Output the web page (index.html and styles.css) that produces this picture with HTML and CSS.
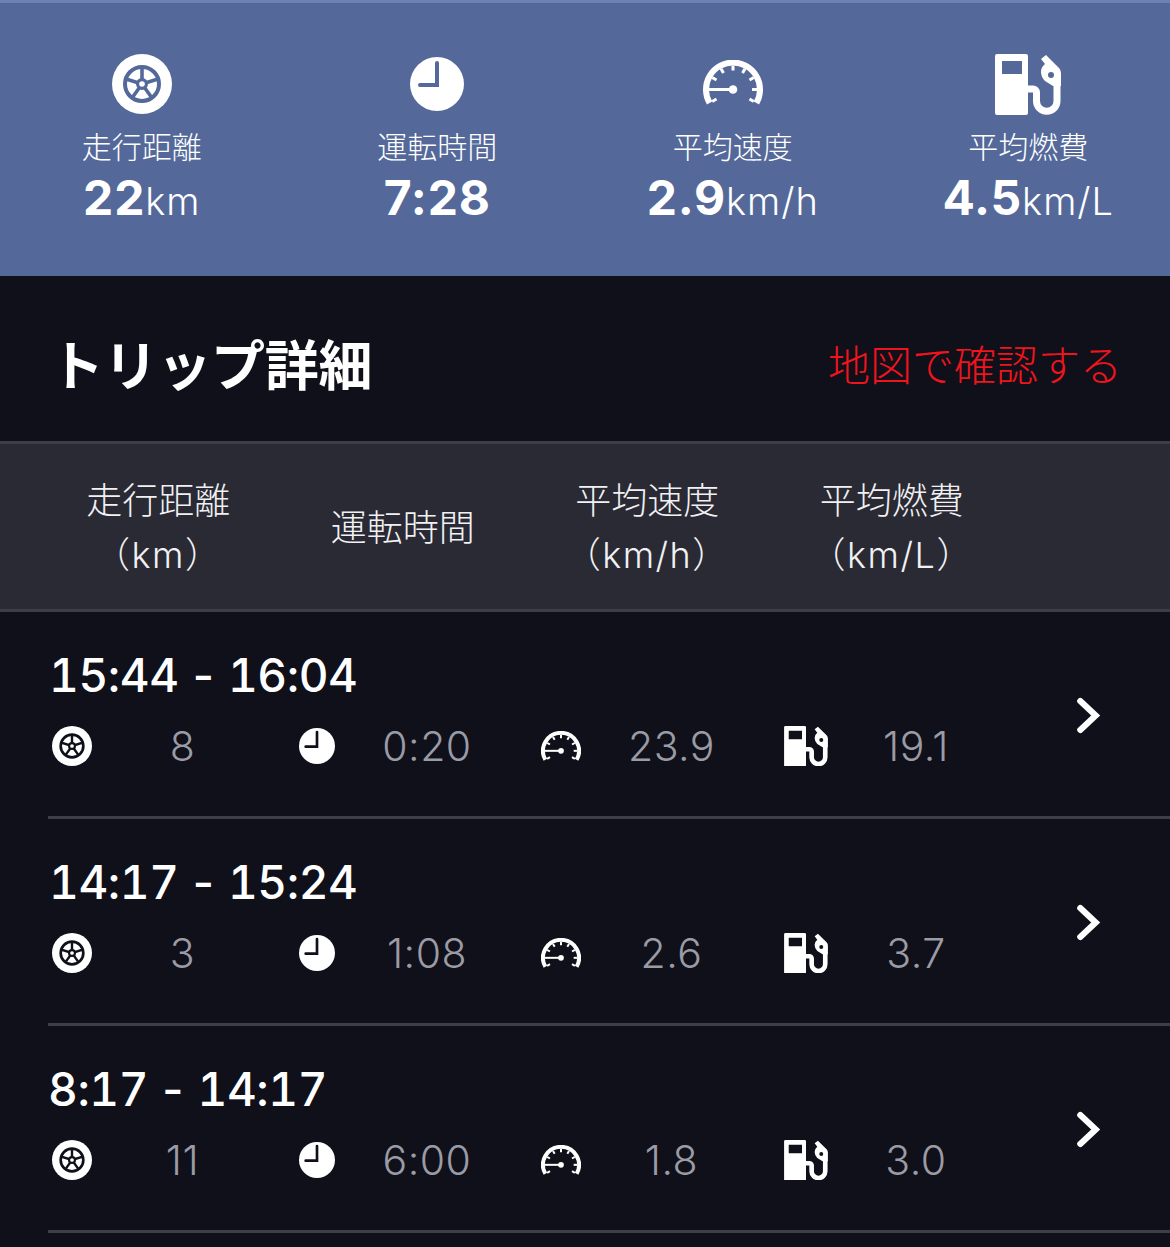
FILE: index.html
```html
<!DOCTYPE html>
<html lang="ja">
<head>
<meta charset="utf-8">
<title>トリップ詳細</title>
<link rel="stylesheet" href="styles.css">
</head>
<body>
<svg class="defs" width="0" height="0">
  <defs>
    <symbol id="tire" viewBox="0 0 60 60">
      <circle cx="30" cy="30" r="30" fill="#fff"/>
      <circle cx="30" cy="30" r="17" fill="none" stroke="var(--c)" stroke-width="4"/>
      <g stroke="var(--c)" stroke-width="3.6">
        <line x1="30" y1="30" x2="30" y2="13"/>
        <line x1="30" y1="30" x2="46" y2="25"/>
        <line x1="30" y1="30" x2="40" y2="44"/>
        <line x1="30" y1="30" x2="20" y2="44"/>
        <line x1="30" y1="30" x2="14" y2="25"/>
      </g>
      <circle cx="30" cy="30" r="6" fill="var(--c)"/>
      <circle cx="30" cy="30" r="2.8" fill="#fff"/>
    </symbol>
    <symbol id="clock" viewBox="0 0 54 54">
      <circle cx="27" cy="27" r="27" fill="#fff"/>
      <path d="M27 6V28H10" fill="none" stroke="var(--c)" stroke-width="4" stroke-linecap="round"/>
    </symbol>
    <symbol id="gauge" viewBox="0 0 60 46">
      <path d="M6.600 43A27 27 0 1 1 53.400 43" fill="none" stroke="#fff" stroke-width="6"/>
      <g stroke="#fff" stroke-width="3">
        <line x1="30" y1="5.500" x2="30" y2="10.500"/>
        <line x1="42" y1="8.700" x2="39.500" y2="13"/>
        <line x1="50.800" y1="17.500" x2="46.500" y2="20"/>
        <line x1="54" y1="29.500" x2="49" y2="29.500"/>
        <line x1="50.800" y1="41.500" x2="46.500" y2="39"/>
        <line x1="18" y1="8.700" x2="20.500" y2="13"/>
        <line x1="9.200" y1="17.500" x2="13.500" y2="20"/>
        <line x1="9.200" y1="41.500" x2="13.500" y2="39"/>
      </g>
      <path d="M4 29.500H30" stroke="#fff" stroke-width="3" fill="none"/>
      <circle cx="30" cy="29.500" r="4.300" fill="#fff"/>
    </symbol>
    <symbol id="fuel" viewBox="0 0 66 61">
      <path fill-rule="evenodd" fill="#fff" d="M2 0H31A2 2 0 0 1 33 2V59A2 2 0 0 1 31 61H2A2 2 0 0 1 0 59V2A2 2 0 0 1 2 0ZM7 7V20H27V7Z"/>
      <path d="M33 35H38A3.500 3.500 0 0 1 41.500 38.500V47A10.250 10.250 0 0 0 62 47V30" fill="none" stroke="#fff" stroke-width="7"/>
      <path d="M46 5L51 1L64 14Q66 16 66 19V32H58L50 27Q46 23 46 18Q46 13 50 10Z" fill="#fff"/>
      <circle cx="56" cy="21" r="3" fill="var(--c)"/>
    </symbol>
    <symbol id="chev" viewBox="0 0 24 36">
      <path d="M4 4L19 18L4 32" fill="none" stroke="#fff" stroke-width="6" stroke-linecap="round" stroke-linejoin="miter"/>
    </symbol>
  </defs>
</svg>

<section class="summary">
  <div class="stat">
    <div class="icon-box"><svg class="tire-lg"><use href="#tire"/></svg></div>
    <div class="stat-label">走行距離</div>
    <div class="stat-value">22<span class="unit">km</span></div>
  </div>
  <div class="stat">
    <div class="icon-box"><svg class="clock-lg"><use href="#clock"/></svg></div>
    <div class="stat-label">運転時間</div>
    <div class="stat-value">7:28</div>
  </div>
  <div class="stat">
    <div class="icon-box"><svg class="gauge-lg"><use href="#gauge"/></svg></div>
    <div class="stat-label">平均速度</div>
    <div class="stat-value">2.9<span class="unit">km/h</span></div>
  </div>
  <div class="stat">
    <div class="icon-box"><svg class="fuel-lg"><use href="#fuel"/></svg></div>
    <div class="stat-label">平均燃費</div>
    <div class="stat-value">4.5<span class="unit">km/L</span></div>
  </div>
</section>

<header class="section-head">
  <h1>トリップ詳細</h1>
  <a class="map-link">地図で確認する</a>
</header>

<div class="columns">
  <div class="col">走行距離<br><span class="col-unit">（km）</span></div>
  <div class="col">運転時間</div>
  <div class="col">平均速度<br><span class="col-unit">（km/h）</span></div>
  <div class="col">平均燃費<br><span class="col-unit">（km/L）</span></div>
</div>

<ul class="trips">
  <li class="trip">
    <div class="trip-time">15:44 - 16:04</div>
    <div class="metrics">
      <div class="metric"><svg class="tire-sm"><use href="#tire"/></svg><span>8</span></div>
      <div class="metric"><svg class="clock-sm"><use href="#clock"/></svg><span>0:20</span></div>
      <div class="metric"><svg class="gauge-sm"><use href="#gauge"/></svg><span>23.9</span></div>
      <div class="metric"><svg class="fuel-sm"><use href="#fuel"/></svg><span>19.1</span></div>
    </div>
    <svg class="chevron"><use href="#chev"/></svg>
  </li>
  <li class="trip">
    <div class="trip-time">14:17 - 15:24</div>
    <div class="metrics">
      <div class="metric"><svg class="tire-sm"><use href="#tire"/></svg><span>3</span></div>
      <div class="metric"><svg class="clock-sm"><use href="#clock"/></svg><span>1:08</span></div>
      <div class="metric"><svg class="gauge-sm"><use href="#gauge"/></svg><span>2.6</span></div>
      <div class="metric"><svg class="fuel-sm"><use href="#fuel"/></svg><span>3.7</span></div>
    </div>
    <svg class="chevron"><use href="#chev"/></svg>
  </li>
  <li class="trip">
    <div class="trip-time short">8:17 - 14:17</div>
    <div class="metrics">
      <div class="metric"><svg class="tire-sm"><use href="#tire"/></svg><span>11</span></div>
      <div class="metric"><svg class="clock-sm"><use href="#clock"/></svg><span>6:00</span></div>
      <div class="metric"><svg class="gauge-sm"><use href="#gauge"/></svg><span>1.8</span></div>
      <div class="metric"><svg class="fuel-sm"><use href="#fuel"/></svg><span>3.0</span></div>
    </div>
    <svg class="chevron"><use href="#chev"/></svg>
  </li>
</ul>
</body>
</html>
```
FILE: styles.css
```css
* { box-sizing: border-box; }
html, body { margin: 0; padding: 0; }
body {
  width: 1170px;
  height: 1247px;
  overflow: hidden;
  background: #0f101a;
  color: #fff;
  font-family: "Inter", "Noto Sans CJK JP", sans-serif;
}
.defs { position: absolute; }

.summary {
  --c: #54699a;
  height: 276px;
  background: #54699a;
  border-top: 3px solid #6d82b3;
  display: grid;
  grid-template-columns: repeat(4, 295.5px);
  justify-content: start;
  margin: 0;
}
.stat {
  height: 273px;
  display: flex;
  flex-direction: column;
  align-items: center;
  margin-left: -6px;
  margin-right: 6px;
  padding-top: 51px;
}
.icon-box {
  height: 60px;
  display: flex;
  align-items: center;
  justify-content: center;
  flex: none;
}
.icon-box svg { display: block; flex: none; }
.tire-lg { width: 60px; height: 60px; }
.clock-lg { width: 54px; height: 54px; }
.gauge-lg { width: 60px; height: 46px; margin-bottom: 3px; }
.fuel-lg { width: 66px; height: 61px; }
.stat-label {
  font-size: 30px;
  line-height: 40px;
  margin-top: 13px;
  font-weight: 300;
  white-space: nowrap;
}
.stat-value {
  font-size: 48px;
  font-weight: 700;
  line-height: 56px;
  margin-top: 3px;
  letter-spacing: 0.8px;
  white-space: nowrap;
}
.unit { font-size: 38px; font-weight: 300; letter-spacing: 1px; }

.section-head {
  height: 168px;
  display: flex;
  align-items: center;
  justify-content: space-between;
  padding: 17px 48px 0 50px;
  border-bottom: 3px solid #3d3e46;
}
.section-head h1 {
  margin: 0;
  font-size: 54px;
  font-weight: 700;
  line-height: 60px;
  letter-spacing: -0.3px;
}
.map-link {
  color: #f0141c;
  font-size: 42px;
  font-weight: 300;
  line-height: 50px;
  margin-bottom: 2px;
}

.columns {
  height: 168px;
  background: #292a33;
  border-bottom: 3px solid #3d3e46;
  display: grid;
  grid-template-columns: repeat(4, 244.5px);
  align-items: center;
  padding: 2px 0 0 36px;
}
.col {
  text-align: center;
  font-size: 36px;
  font-weight: 300;
  line-height: 54px;
  color: #f1f1f3;
}
.col-unit { letter-spacing: 1.5px; }

.trips { list-style: none; margin: 0; padding: 0; }
.trip {
  position: relative;
  height: 207px;
  margin-left: 48px;
  border-bottom: 3px solid #3d3e46;
  padding: 36px 0 0 3px;
}
.trip-time {
  font-size: 46px;
  font-weight: 500;
  line-height: 54px;
  letter-spacing: -0.4px;
  word-spacing: -2px;
  margin-left: -2px;
  font-variant-numeric: tabular-nums;
  white-space: nowrap;
}
.trip-time.short { margin-left: -3px; }
.metrics {
  display: grid;
  grid-template-columns: repeat(4, 244.5px);
  margin-top: 22px;
}
.metric {
  display: grid;
  grid-template-columns: 44px 175px;
  align-items: center;
  height: 44px;
  color: #9b9ba5;
  font-size: 41px;
  font-weight: 300;
  letter-spacing: 0.5px;
  --c: #0f101a;
}
.metric svg { display: block; }
.metric span { text-align: center; line-height: 42px; }
.tire-sm { width: 40px; height: 40px; margin-left: 1px; }
.clock-sm { width: 36px; height: 36px; margin-left: 3px; }
.gauge-sm { width: 40px; height: 31px; margin-left: 1px; }
.fuel-sm { width: 44px; height: 40.5px; margin-left: -1px; }
.chevron { position: absolute; right: 69px; top: 85px; width: 25px; height: 37px; }
```
